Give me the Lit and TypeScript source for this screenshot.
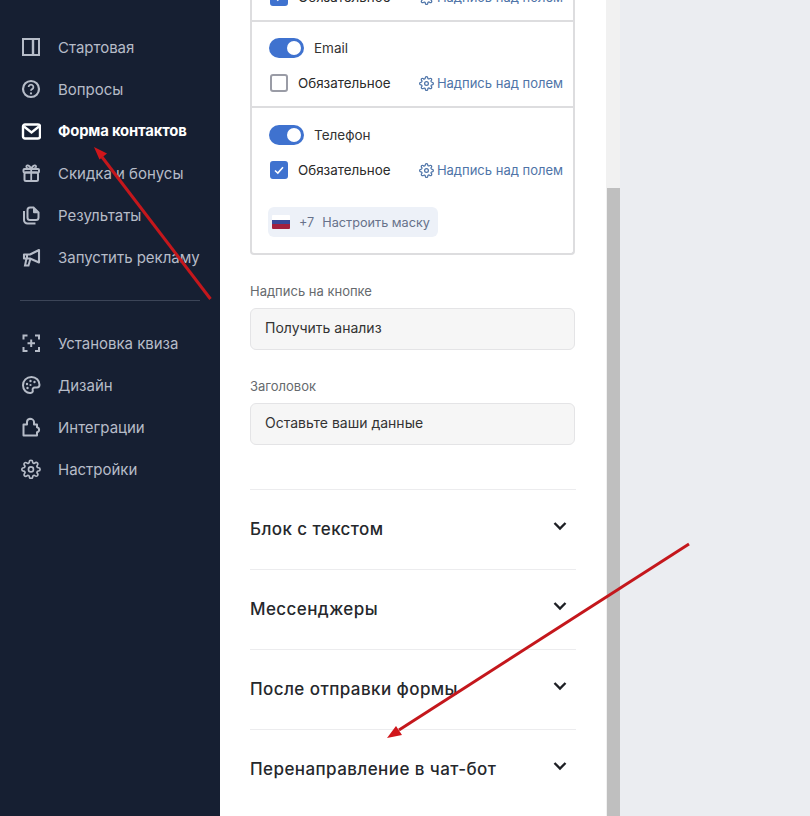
import { LitElement, html, css, svg } from "lit";
import { customElement } from "lit/decorators.js";

const gearPath = svg`<circle cx="12" cy="12" r="3" fill="none" stroke="currentColor" stroke-width="2"/><path d="M19.400 15a1.650 1.650 0 0 0 .33 1.820l.06.06a2 2 0 0 1 0 2.830 2 2 0 0 1-2.830 0l-.06-.06a1.650 1.650 0 0 0-1.820-.33 1.650 1.650 0 0 0-1 1.510V21a2 2 0 0 1-2 2 2 2 0 0 1-2-2v-.09A1.650 1.650 0 0 0 9 19.400a1.650 1.650 0 0 0-1.820.33l-.06.06a2 2 0 0 1-2.830 0 2 2 0 0 1 0-2.830l.06-.06a1.650 1.650 0 0 0 .33-1.820 1.650 1.650 0 0 0-1.510-1H3a2 2 0 0 1-2-2 2 2 0 0 1 2-2h.09A1.650 1.650 0 0 0 4.600 9a1.650 1.650 0 0 0-.33-1.820l-.06-.06a2 2 0 0 1 0-2.830 2 2 0 0 1 2.830 0l.06.06a1.650 1.650 0 0 0 1.820.33H9a1.650 1.650 0 0 0 1-1.510V3a2 2 0 0 1 2-2 2 2 0 0 1 2 2v.09a1.650 1.650 0 0 0 1 1.510 1.650 1.650 0 0 0 1.820-.33l.06-.06a2 2 0 0 1 2.830 0 2 2 0 0 1 0 2.830l-.06.06a1.650 1.650 0 0 0-.33 1.820V9a1.650 1.650 0 0 0 1.510 1H21a2 2 0 0 1 2 2 2 2 0 0 1-2 2h-.09a1.650 1.650 0 0 0-1.510 1z" fill="none" stroke="currentColor" stroke-width="2"/>`;

const icons: Record<string, any> = {
  start: svg`<rect x="2" y="2" width="16" height="16" fill="none" stroke="currentColor" stroke-width="2"/><path d="M12 2v16" stroke="currentColor" stroke-width="2.400"/>`,
  help: svg`<circle cx="10" cy="10" r="8" fill="none" stroke="currentColor" stroke-width="2.200"/><path d="M7.600 8a2.400 2.400 0 1 1 3.600 2.100c-.8.5-1.200.9-1.200 1.700" fill="none" stroke="currentColor" stroke-width="1.800"/><circle cx="10" cy="14.400" r="1.100" fill="currentColor"/>`,
  mail: svg`<rect x="2" y="3.500" width="17" height="14" rx="2" fill="none" stroke="currentColor" stroke-width="2.400"/><path d="M3 5.500l7.500 6 7.500-6" fill="none" stroke="currentColor" stroke-width="2.400"/>`,
  gift: svg`<rect x="3.500" y="9.500" width="13.500" height="8.500" rx="1.500" fill="none" stroke="currentColor" stroke-width="2"/><rect x="2.500" y="6" width="15.500" height="3.500" rx="1" fill="none" stroke="currentColor" stroke-width="2"/><path d="M10.200 6v12M10.200 6C8.500 1.500 4.500 1.500 5.500 4.300 6 5.600 8.500 6 10.200 6c1.700 0 4.200-.4 4.700-1.700 1-2.800-3-2.800-4.700 1.700" fill="none" stroke="currentColor" stroke-width="1.800"/>`,
  pages: svg`<path d="M9 2.500h3.500l5 5v5a2.500 2.500 0 0 1-2.500 2.500H9a2.500 2.500 0 0 1-2.500-2.500V5A2.500 2.500 0 0 1 9 2.500z" fill="none" stroke="currentColor" stroke-width="2"/><path d="M12 2.500v4.700a1 1 0 0 0 1 1h4.500z" fill="currentColor"/><path d="M3 6v9a3.500 3.500 0 0 0 3.500 3.500h8" fill="none" stroke="currentColor" stroke-width="2"/>`,
  ads: svg`<path d="M3 7.500h6l9-4.500v12.500l-9-4H3z" fill="none" stroke="currentColor" stroke-width="2.100" stroke-linejoin="round"/><path d="M5.500 11.500l-1.500 7h3.500l2-7M6 7.500v4" fill="none" stroke="currentColor" stroke-width="2"/>`,
  install: svg`<path d="M6.500 2.500H2.500V6.500M14 2.500h4V6.500M6.500 18H2.500V14M14 18h4V14" fill="none" stroke="currentColor" stroke-width="2"/><path d="M10.200 6.500v7.500M6.500 10.200h7.500" stroke="currentColor" stroke-width="2"/>`,
  design: svg`<path d="M10.500 2C5.500 2 2 5.600 2 10.200 2 14.800 5.500 18.300 9.500 18c2-.2 2.600-1.500 2.200-2.800-.5-1.500.6-2.700 2-2.700h2.300c1.500 0 2.500-1.100 2.500-2.700C18.500 5.500 15 2 10.500 2z" fill="none" stroke="currentColor" stroke-width="2"/><circle cx="6" cy="9" r="1.200" fill="currentColor"/><circle cx="9.500" cy="6" r="1.200" fill="currentColor"/><circle cx="13.500" cy="7" r="1.200" fill="currentColor"/><circle cx="6.500" cy="13" r="1.200" fill="currentColor"/><circle cx="9.500" cy="10" r="1.100" fill="currentColor"/>`,
  puzzle: svg`<path d="M2.500 18.500V7.500h3.500V5a3.500 3.500 0 0 1 3-3.300c2 0 4 1.500 4 3.300v2.500h3v2.700a2.600 2.600 0 0 1 0 5.100v3.200z" fill="none" stroke="currentColor" stroke-width="2" stroke-linejoin="round"/>`,
  gear: svg`<g transform="scale(.83) translate(0 .5)">${gearPath}</g>`,
};

const top = [
  ["start", "Стартовая"],
  ["help", "Вопросы"],
  ["mail", "Форма контактов"],
  ["gift", "Скидка и бонусы"],
  ["pages", "Результаты"],
  ["ads", "Запустить рекламу"],
];
const bottom = [
  ["install", "Установка квиза"],
  ["design", "Дизайн"],
  ["puzzle", "Интеграции"],
  ["gear", "Настройки"],
];

@customElement("app-root")
export class AppRoot extends LitElement {
  static styles = css`
    :host {
      display: block;
      width: 810px;
      height: 816px;
      position: relative;
      overflow: hidden;
      background: #ebedf1;
      font-family: "Inter", "Noto Sans", sans-serif;
    }
    .page { display: flex; height: 816px; }
    .side {
      width: 220px;
      flex: none;
      background: #161f32;
      padding: 26px 20px 0 20px;
      box-sizing: border-box;
    }
    .item {
      display: flex;
      align-items: center;
      height: 42px;
      color: #b6bcc8;
      font-size: 15px;
      letter-spacing: -0.02px;
    }
    .item.on { color: #fff; font-weight: 700; letter-spacing: -0.15px; font-size: 14.800px; }
    .item svg { width: 20px; height: 20px; margin: 0 17px 0 1px; flex: none; }
    .sep { height: 1px; background: #3c4558; margin: 22px 0 21px; }
    .main {
      width: 386px;
      flex: none;
      background: #fff;
      padding: 0 31px 0 30px;
      box-sizing: border-box;
    }
    .card {
      width: 325px;
      height: 255px;
      box-sizing: border-box;
      border: 2px solid #dddddf;
      border-top: 0;
      border-radius: 0 0 4px 4px;
      display: flex;
      flex-direction: column;
      overflow: hidden;
    }
    .row { flex: none; box-sizing: border-box; padding: 0 10px 0 17px; border-bottom: 2px solid #dddddf; }
    .row:last-child { border-bottom: 0; flex: 1; }
    .r0 { height: 22px; display: flex; flex-direction: column; justify-content: flex-end; padding-bottom: 14px; }
    .r1 { height: 86px; padding-top: 16px; }
    .r2 { padding-top: 17px; }
    .toggle-line { display: flex; align-items: center; gap: 10px; font-size: 13.500px; color: #333; height: 20px; }
    .toggle {
      width: 35px; height: 20px; border-radius: 10px; background: #3f72cf; position: relative; flex: none;
    }
    .toggle::after {
      content: ""; position: absolute; right: 3px; top: 3px; width: 14px; height: 14px; border-radius: 50%; background: #fff;
    }
    .check-line { display: flex; align-items: center; height: 18px; margin-top: 16px; font-size: 13.400px; color: #2a2a2a; }
    .r0 .check-line { margin-top: 0; height: 18px; }
    .box {
      width: 18px; height: 18px; box-sizing: border-box; border: 2px solid #9a9ca6; border-radius: 3px; margin: 0 10px 0 1px; flex: none;
    }
    .box.on { background: #3f72cf; border-color: #3f72cf; display: flex; align-items: center; justify-content: center; }
    .box svg { width: 12px; height: 12px; }
    .link { margin-left: auto; display: flex; align-items: center; gap: 3px; color: #4e74a8; font-size: 13px; white-space: nowrap; }
    .link svg { width: 15px; height: 15px; color: #4e74a8; }
    .mask {
      display: inline-flex; align-items: center; height: 30px; margin: 28px 0 0 -1px; padding: 0 8px 0 4px; border-radius: 6px; background: #edf1f8; color: #67718a; font-size: 12.700px;
    }
    .flag { width: 18px; height: 14px; margin-right: 9px; border-radius: 1px; overflow: hidden; display: flex; flex-direction: column; flex: none; }
    .flag i { flex: 1; display: block; }
    .plus { margin-right: 8px; }
    .label { font-size: 13px; color: #666a6e; line-height: 16px; margin-top: 28px; }
    .field {
      height: 42px; box-sizing: border-box; margin-top: 9px; width: 325px; border: 1px solid #e4e4e6; border-radius: 6px; background: #f6f6f6;
      display: flex; align-items: center; padding: 0 0 3px 14px; font-size: 14px; color: #333;
    }
    .acc { margin-top: 44px; }
    .acc-row {
      width: 326px; height: 80px; box-sizing: border-box; border-top: 1px solid #ececee; display: flex; justify-content: space-between; padding: 27px 6px 0 0; font-size: 17px; letter-spacing: .42px; font-weight: 500; color: #26282c; line-height: 24px;
    }
    .acc-row svg { width: 20px; height: 20px; margin-top: -1px; }
    .track { width: 14px; flex: none; background: #f1f1f1; display: flex; flex-direction: column; padding-left: 1px; box-sizing: border-box; }
    .thumb { margin-top: 188px; flex: 1; background: #bfbfbf; }
    .arrows { position: absolute; inset: 0; width: 810px; height: 816px; pointer-events: none; }
  `;

  private checkLine(checked: boolean) {
    return html`<div class="check-line">
      <span class="box ${checked ? "on" : ""}">${checked
        ? html`<svg viewBox="0 0 12 12"><path d="M2 6.500l2.800 2.500L10 3.200" fill="none" stroke="#fff" stroke-width="1.600"/></svg>`
        : ""}</span>
      <span>Обязательное</span>
      <span class="link"><svg viewBox="0 0 24 24">${gearPath}</svg>Надпись над полем</span>
    </div>`;
  }

  private nav(list: string[][]) {
    return list.map(
      ([ic, t]) => html`<div class="item ${ic === "mail" ? "on" : ""}">
        <svg viewBox="0 0 20 20">${icons[ic]}</svg><span>${t}</span>
      </div>`
    );
  }

  render() {
    return html`
      <div class="page">
        <nav class="side">
          ${this.nav(top)}
          <div class="sep"></div>
          ${this.nav(bottom)}
        </nav>
        <main class="main">
          <div class="card">
            <div class="row r0">${this.checkLine(true)}</div>
            <div class="row r1">
              <div class="toggle-line"><span class="toggle"></span>Email</div>
              ${this.checkLine(false)}
            </div>
            <div class="row r2">
              <div class="toggle-line"><span class="toggle"></span>Телефон</div>
              ${this.checkLine(true)}
              <div class="mask">
                <span class="flag"><i style="background:#fff"></i><i style="background:#3a4a9a"></i><i style="background:#a3213f"></i></span>
                <span class="plus">+7</span>Настроить маску
              </div>
            </div>
          </div>
          <div class="label">Надпись на кнопке</div>
          <div class="field">Получить анализ</div>
          <div class="label">Заголовок</div>
          <div class="field">Оставьте ваши данные</div>
          <div class="acc">
            ${["Блок с текстом", "Мессенджеры", "После отправки формы", "Перенаправление в чат-бот"].map(
              (t) => html`<div class="acc-row"><span>${t}</span>
                <svg viewBox="0 0 20 20"><path d="M4.500 7l5.500 5.500L15.500 7" fill="none" stroke="#1d1f24" stroke-width="2.400"/></svg>
              </div>`
            )}
          </div>
        </main>
        <div class="track"><div class="thumb"></div></div>
      </div>
      <svg class="arrows" viewBox="0 0 810 816">
        <path d="M210.500 299L102 157" stroke="#c4171c" stroke-width="3" fill="none"/>
        <path d="M94 147l13 6.500-7.500 6z" fill="#d0161b"/>
        <path d="M689 544L399 730" stroke="#c4171c" stroke-width="3" fill="none"/>
        <path d="M387 738l9-12 6 9z" fill="#d0161b"/>
      </svg>
    `;
  }
}
